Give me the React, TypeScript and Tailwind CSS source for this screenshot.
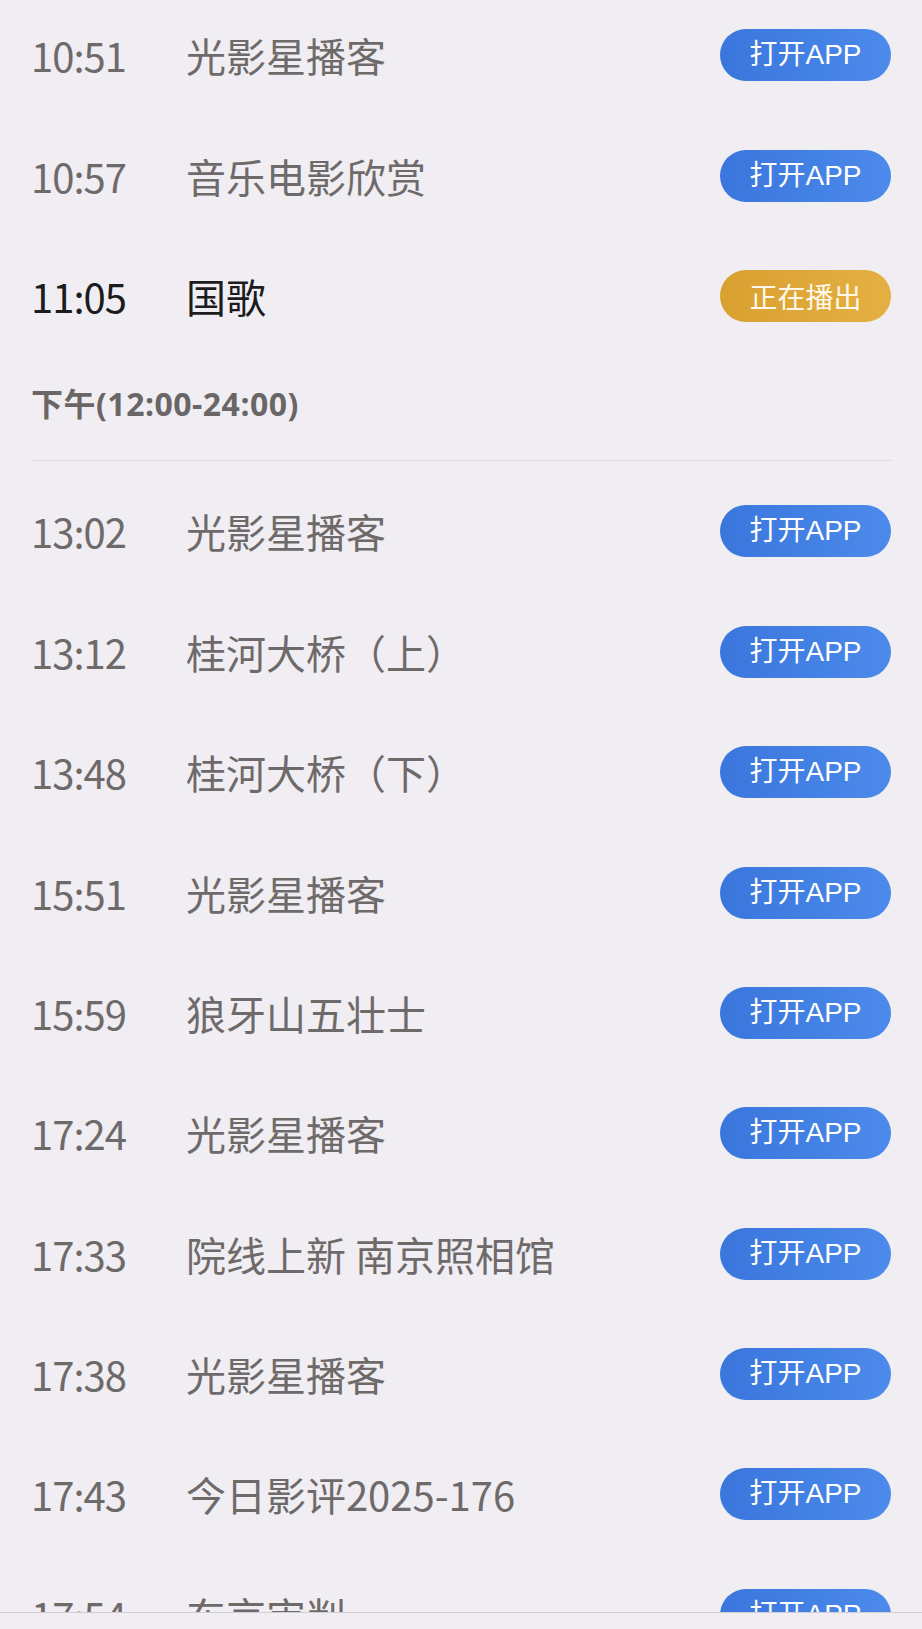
import React from "react";

type Program = {
  time: string;
  title: string;
  live?: boolean;
};

const morning: Program[] = [
  { time: "10:51", title: "光影星播客" },
  { time: "10:57", title: "音乐电影欣赏" },
  { time: "11:05", title: "国歌", live: true },
];

const afternoon: Program[] = [
  { time: "13:02", title: "光影星播客" },
  { time: "13:12", title: "桂河大桥（上）" },
  { time: "13:48", title: "桂河大桥（下）" },
  { time: "15:51", title: "光影星播客" },
  { time: "15:59", title: "狼牙山五壮士" },
  { time: "17:24", title: "光影星播客" },
  { time: "17:33", title: "院线上新 南京照相馆" },
  { time: "17:38", title: "光影星播客" },
  { time: "17:43", title: "今日影评2025-176" },
  { time: "17:54", title: "东京审判" },
];

function Row({ p }: { p: Program }) {
  const color = p.live ? "text-[#1c1c1e]" : "text-[#6f6a6a]";
  return (
    <div className="flex h-[120.4px] shrink-0 items-center px-[31px]">
      <div
        className={`${color} flex flex-1 items-baseline text-[40px] leading-none font-['Noto_Sans_CJK_SC',sans-serif]`}
      >
        <span className="tracking-[-1px]">{p.time}</span>
        <span className="ml-[60px]">{p.title}</span>
      </div>
      {p.live ? (
        <button className="flex h-[52px] w-[171px] items-center justify-center rounded-full bg-linear-to-r from-[#d9a030] to-[#e5b042] text-[28px] leading-none text-[#fff8ea] font-['Noto_Sans_CJK_SC',sans-serif]">
          正在播出
        </button>
      ) : (
        <button className="flex h-[52px] w-[171px] items-center justify-center rounded-full bg-linear-to-r from-[#3a76dc] to-[#4c8aeb] text-[28px] leading-none text-white font-['Liberation_Sans','Noto_Sans_CJK_SC',sans-serif]">
          打开APP
        </button>
      )}
    </div>
  );
}

export default function App() {
  return (
    <div className="flex h-[1629px] w-[922px] flex-col bg-[#f0eef3]">
      <div className="flex-1 overflow-hidden">
        <div className="-mt-[5px] flex flex-col">
          {morning.map((p) => (
            <Row key={p.time} p={p} />
          ))}
          <div className="flex h-[96px] items-center px-[31px]">
            <span className="text-[32px] font-bold leading-none tracking-[0.5px] text-[#6b6666] font-['Noto_Sans','Noto_Sans_CJK_SC',sans-serif]">
              下午(12:00-24:00)
            </span>
          </div>
          <div className="mx-[31px] mt-[8px] mb-[10px] h-px bg-[#d9d7dd]" />
          {afternoon.map((p) => (
            <Row key={p.time} p={p} />
          ))}
        </div>
      </div>
      <div className="h-[17px] shrink-0 border-t border-[#d0ced4] bg-[#f0eef3]" />
    </div>
  );
}
